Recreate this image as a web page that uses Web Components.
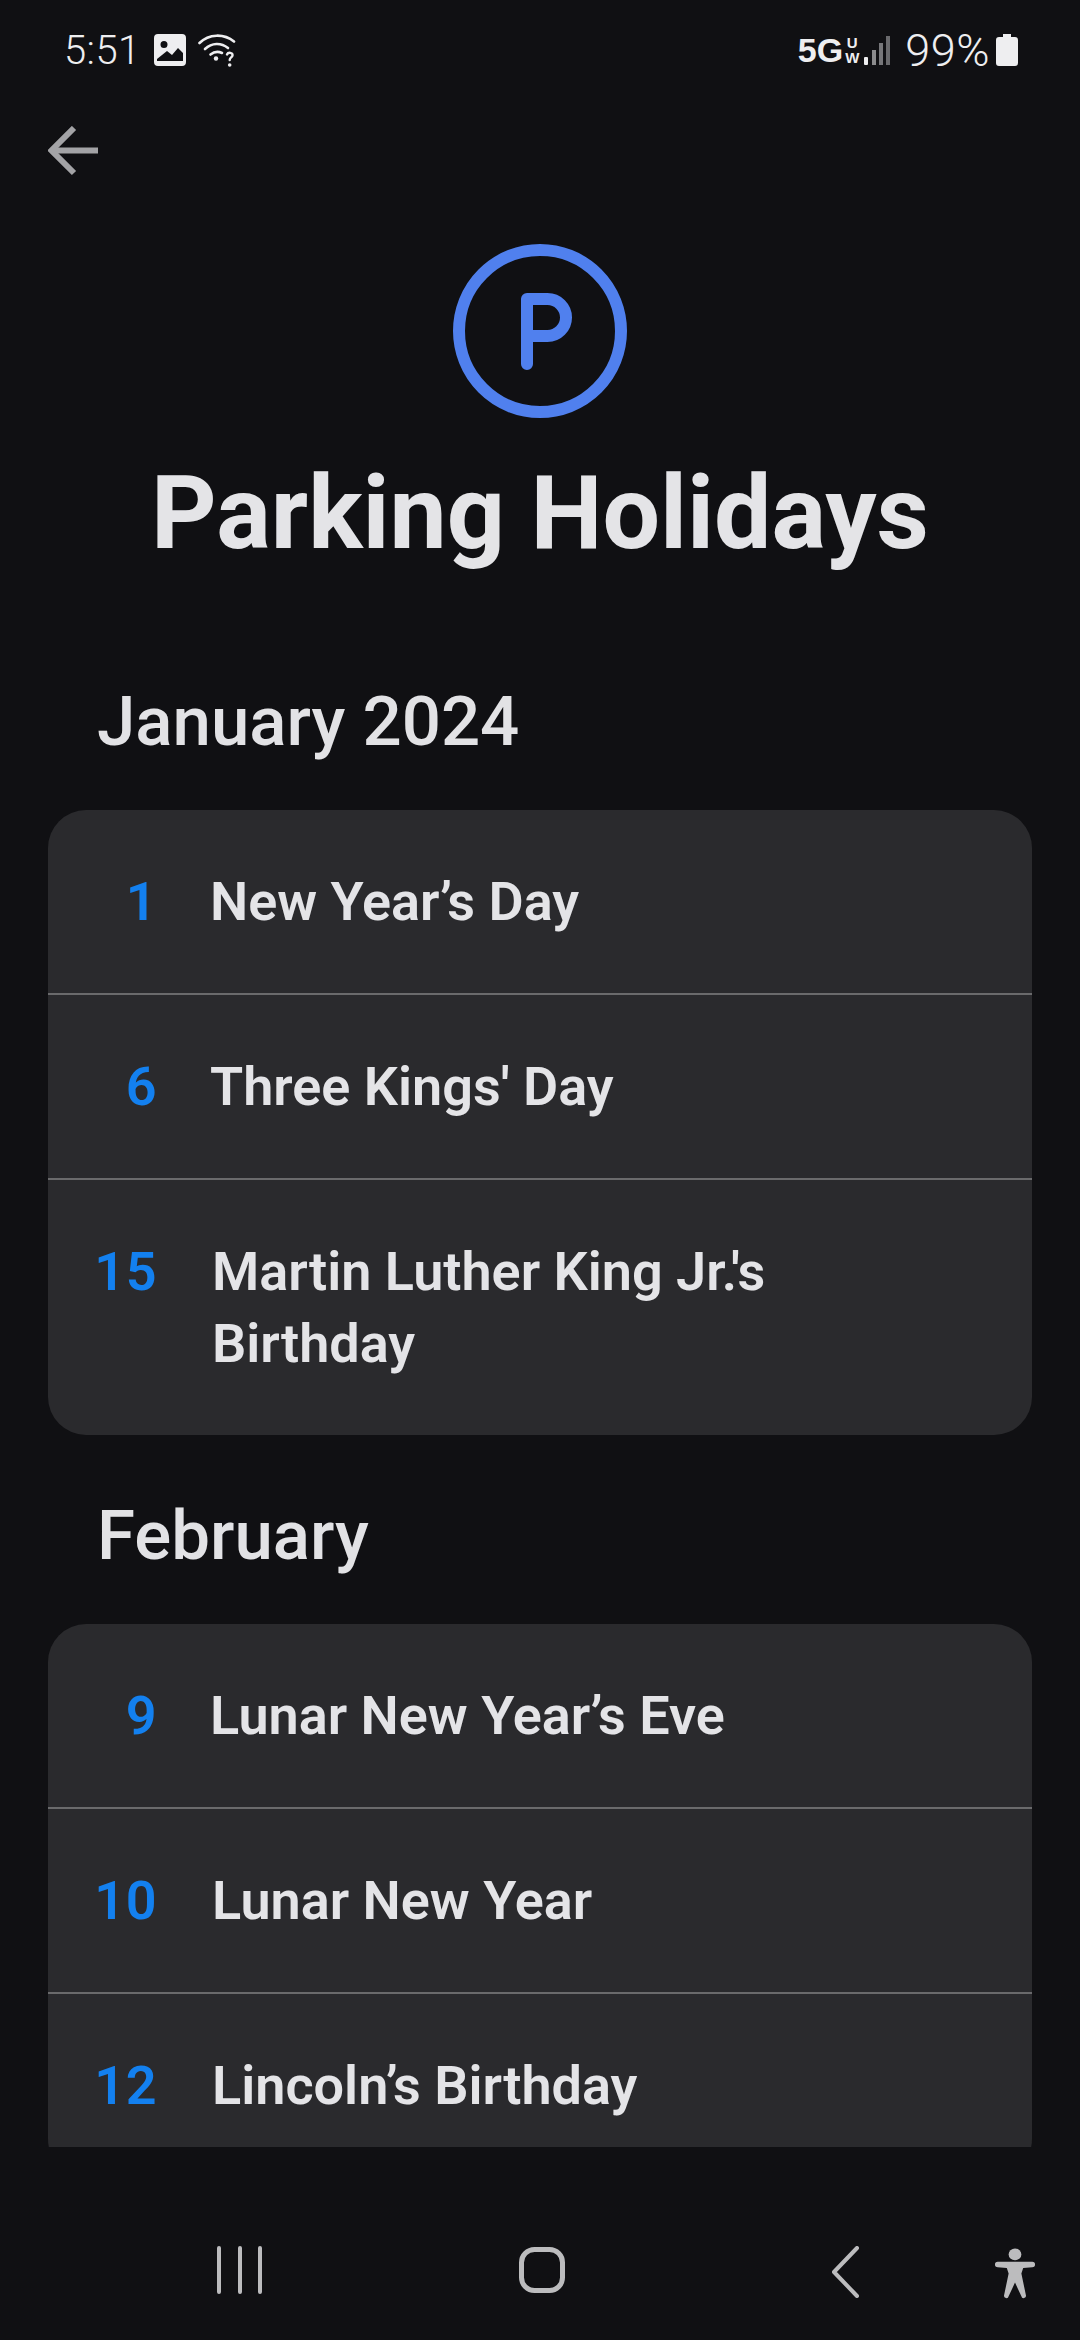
<!DOCTYPE html>
<html lang="en">
<head>
  <meta charset="UTF-8">
  <title>Parking Holidays</title>
  <style>
    html, body { margin: 0; background: #101013; }
    body { font-family: Roboto, "Noto Sans", sans-serif; width: 1080px; height: 2340px; overflow: hidden; display: flex; flex-direction: column; }
    holiday-page { flex: 1; min-height: 0; }
  </style>
</head>
<body>
  <status-bar></status-bar>
  <holiday-page>
    <month-section title="January 2024">
      <holiday-row day="1">New Year’s Day</holiday-row>
      <holiday-row day="6">Three Kings' Day</holiday-row>
      <holiday-row day="15" wide>Martin Luther King Jr.'s Birthday</holiday-row>
    </month-section>
    <month-section title="February">
      <holiday-row day="9">Lunar New Year’s Eve</holiday-row>
      <holiday-row day="10" wide>Lunar New Year</holiday-row>
      <holiday-row day="12" wide>Lincoln’s Birthday</holiday-row>
    </month-section>
  </holiday-page>
  <nav-bar></nav-bar>

  <script>
    class StatusBar extends HTMLElement {
      constructor() {
        super();
        this.attachShadow({ mode: 'open' });
        this.shadowRoot.innerHTML = `
          <style>
            :host { display: flex; align-items: center; justify-content: space-between; height: 100px; padding: 0 62px 0 64px; color: #eeeef0; flex: none; box-sizing: border-box; }
            .side { display: flex; align-items: center; }
            .time { font-size: 40px; font-weight: 300; letter-spacing: 0.4px; margin-right: 13px; }
            .pct { font-size: 45px; font-weight: 300; letter-spacing: 0.5px; margin: 0 6px 0 14px; }
            .net { font-size: 34px; font-weight: 700; font-family: "Liberation Sans", sans-serif; }
            .uw { display: flex; flex-direction: column; font: 700 15px/15px "Liberation Sans", sans-serif; text-align: center; margin: 0 4px 0 2px; }
            svg { display: block; }
          </style>
          <div class="side">
            <span class="time">5:51</span>
            <svg width="32" height="32" viewBox="0 0 32 32"><path fill="#eeeef0" fill-rule="evenodd" d="M4 0h24a4 4 0 0 1 4 4v24a4 4 0 0 1-4 4H4a4 4 0 0 1-4-4V4a4 4 0 0 1 4-4zM3 27h26v-8l-5-5-6 7-5-4-10 8zM10 7a3.500 3.500 0 1 0 0 7 3.500 3.500 0 0 0 0-7z"/></svg>
            <svg style="margin-left:12px" width="38" height="33" viewBox="0 0 38 33" fill="none" stroke="#eeeef0" stroke-width="2.600" stroke-linecap="round"><path d="M1.500 9C11 -0.500 26 -0.500 36 7.500"/><path d="M7 15c7-6.500 16-6.500 23-1"/><path d="M12.500 20.500c4-3.200 8-3.200 11.500-1.500"/><circle cx="18" cy="24.500" r="2.200" fill="#eeeef0" stroke="none"/><path d="M29 20.500c1-2.500 6-2.200 5.500 1 -.3 2-2.800 2-2.800 4.500" stroke-width="2.400"/><circle cx="31.700" cy="31" r="1.800" fill="#eeeef0" stroke="none"/></svg>
          </div>
          <div class="side">
            <span class="net">5G</span>
            <span class="uw"><span>U</span><span>W</span></span>
            <svg width="28" height="30" viewBox="0 0 28 30"><rect x="1" y="22" width="4" height="8" rx="1" fill="#eeeef0"/><rect x="9" y="15" width="4" height="15" fill="#8b8b8d"/><rect x="16" y="8" width="4" height="22" fill="#77777a"/><rect x="23" y="1" width="4" height="29" fill="#6a6a6d"/></svg>
            <span class="pct">99%</span>
            <svg width="22" height="32" viewBox="0 0 22 32"><path fill="#eeeef0" d="M7 0h8v3h4a3 3 0 0 1 3 3v23a3 3 0 0 1-3 3H3a3 3 0 0 1-3-3V6a3 3 0 0 1 3-3h4z"/></svg>
          </div>
        `;
      }
    }

    class HolidayPage extends HTMLElement {
      constructor() {
        super();
        this.attachShadow({ mode: 'open' });
        this.shadowRoot.innerHTML = `
          <style>
            :host { display: flex; flex-direction: column; }
            .back { height: 50px; padding: 26px 0 0 48px; flex: none; }
            .back svg { display: block; }
            .head { display: flex; flex-direction: column; align-items: center; padding-top: 67px; flex: none; }
            h1 { margin: 34px 0 0; font-size: 102px; line-height: 120px; font-weight: 700; color: #e4e4e7; }
            .scroll { margin: 0 48px; flex: 1; min-height: 0; overflow: hidden; padding-top: 111px; }
          </style>
          <div class="back">
            <svg width="50" height="50" viewBox="0 0 50 50" fill="none" stroke="#a3a3a6" stroke-width="6"><path d="M50 24.500H4"/><path d="M26 2L3.500 24.500 26 47"/></svg>
          </div>
          <div class="head">
            <svg width="176" height="176" viewBox="0 0 176 176" fill="none" stroke="#5080ee" stroke-width="12" stroke-linecap="round" stroke-linejoin="round"><circle cx="88" cy="88" r="81"/><path d="M75 121V56h20.500a18.500 18.500 0 0 1 0 37H75"/></svg>
            <h1>Parking Holidays</h1>
          </div>
          <div class="scroll"><slot></slot></div>
        `;
      }
    }

    class MonthSection extends HTMLElement {
      constructor() {
        super();
        this.attachShadow({ mode: 'open' });
        this.shadowRoot.innerHTML = `
          <style>
            :host { display: block; }
            h2 { margin: 0; padding: 0 0 0 49px; height: 126px; font-size: 69px; line-height: 76px; font-weight: 500; color: #e2e2e5; }
            .card { background: #2a2a2d; border-radius: 38px; overflow: hidden; margin-bottom: 63px; display: flex; flex-direction: column; }
            ::slotted(holiday-row:not(:last-child)) { border-bottom: 2px solid #6a6a6c; }
          </style>
          <h2></h2>
          <div class="card"><slot></slot></div>
        `;
        this.shadowRoot.querySelector('h2').textContent = this.getAttribute('title');
      }
    }

    class HolidayRow extends HTMLElement {
      constructor() {
        super();
        this.attachShadow({ mode: 'open' });
        this.shadowRoot.innerHTML = `
          <style>
            :host { display: flex; align-items: flex-start; padding: 56px 0 55px; font-size: 54px; line-height: 72px; font-weight: 600; color: #e4e4e7; box-sizing: border-box; }
            .day { width: 109px; text-align: right; color: #1380ef; flex: none; letter-spacing: 0.5px; }
            .name { margin-left: 53px; max-width: 620px; }
            :host([wide]) .name { margin-left: 55px; }
          </style>
          <span class="day"></span>
          <span class="name"><slot></slot></span>
        `;
        this.shadowRoot.querySelector('.day').textContent = this.getAttribute('day');
      }
    }

    class NavBar extends HTMLElement {
      constructor() {
        super();
        this.attachShadow({ mode: 'open' });
        this.shadowRoot.innerHTML = `
          <style>
            :host { display: block; position: relative; height: 193px; flex: none; }
            svg { position: absolute; top: 99px; }
          </style>
          <svg style="left:215px;top:97px" width="50" height="52" viewBox="0 0 50 52" fill="none" stroke="#bcbcbe" stroke-width="4" stroke-linecap="round"><path d="M4 4v44M25 4v44M45 4v44"/></svg>
          <svg style="left:518px" width="50" height="50" viewBox="0 0 50 50" fill="none" stroke="#bcbcbe" stroke-width="5"><rect x="3.500" y="3.500" width="41" height="41" rx="13"/></svg>
          <svg style="left:830px" width="32" height="52" viewBox="0 0 32 52" fill="none" stroke="#bcbcbe" stroke-width="4" stroke-linecap="round" stroke-linejoin="round"><path d="M27 2L4 26l23 24"/></svg>
          <svg style="left:994px;top:101px" width="42" height="51" viewBox="0 0 46 56" fill="#bcbcbe"><ellipse cx="23" cy="7" rx="7" ry="6.500"/><path d="M4 15h38a3 3 0 0 1 0 6l-10 1-2 6 5 24a2.500 2.500 0 0 1-5 1L23 38l-7 15a2.500 2.500 0 0 1-5-1l5-24-2-6-10-1a3 3 0 0 1 0-6z"/></svg>
        `;
      }
    }

    customElements.define('status-bar', StatusBar);
    customElements.define('holiday-page', HolidayPage);
    customElements.define('month-section', MonthSection);
    customElements.define('holiday-row', HolidayRow);
    customElements.define('nav-bar', NavBar);
  </script>
</body>
</html>
